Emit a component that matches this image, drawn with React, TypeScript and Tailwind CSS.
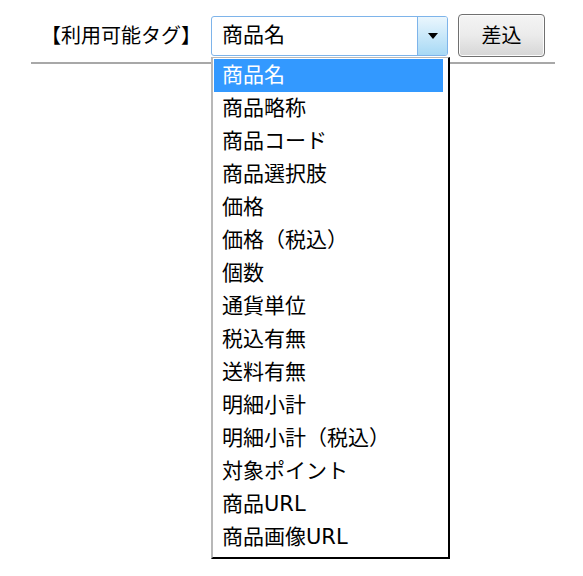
import { useState } from 'react';

const TAGS = [
  '商品名',
  '商品略称',
  '商品コード',
  '商品選択肢',
  '価格',
  '価格（税込）',
  '個数',
  '通貨単位',
  '税込有無',
  '送料有無',
  '明細小計',
  '明細小計（税込）',
  '対象ポイント',
  '商品URL',
  '商品画像URL',
];

export default function App() {
  const [selected, setSelected] = useState(0);

  return (
    <div
      className="w-[583px] h-[576px] bg-white text-black"
      style={{ fontFamily: '"DejaVu Sans", "Noto Sans CJK JP", sans-serif' }}
    >
      <div className="pl-[31px] pr-[28px] pt-[14px]">
        {/* Tag row */}
        <div className="flex items-center h-[43px]">
          <span className="ml-[10px] w-[170px] text-[20px] leading-none">【利用可能タグ】</span>
          <div className="relative">
            <div className="flex w-[237px] h-[40px] border border-[#7eb4ea] rounded-[3px] bg-white">
              <div className="flex-1 pl-[10px] flex items-center text-[21px] leading-none">
                {TAGS[selected]}
              </div>
              <div className="w-[30px] flex items-center justify-center border-l border-[#7eb4ea] rounded-r-[2px] bg-gradient-to-b from-[#eaf6fd] to-[#a7d9f5]">
                <svg width="10" height="6" viewBox="0 0 10 6">
                  <path d="M0 0 H10 L5 6 Z" fill="#000" />
                </svg>
              </div>
            </div>

            {/* Open list */}
            <ul className="absolute left-0 top-[41px] z-10 w-[239px] bg-white border-l-[2px] border-l-[#b8b8b8] border-t border-t-[#b8b8b8] border-r-[2px] border-r-black border-b-[2px] border-b-black pl-[1px] pr-[5px] pt-[1px] pb-[3px]">
              {TAGS.map((t, i) => (
                <li
                  key={t}
                  onClick={() => setSelected(i)}
                  className={`h-[33px] pl-[8px] flex items-center text-[21px] leading-none cursor-default ${
                    i === selected ? 'bg-[#3399ff] text-white' : ''
                  }`}
                >
                  {t}
                </li>
              ))}
            </ul>
          </div>
          <button className="ml-[10px] w-[87px] h-[43px] border border-[#707070] rounded-[4px] bg-gradient-to-b from-[#f4f4f4] via-[#ebebeb] to-[#d6d6d6] text-[20px] leading-none shadow-[inset_0_0_0_1px_#fcfcfc]">
            差込
          </button>
        </div>
        <div className="mt-[5px] h-[2px] bg-[#a8a8a8]" />
      </div>
    </div>
  );
}
